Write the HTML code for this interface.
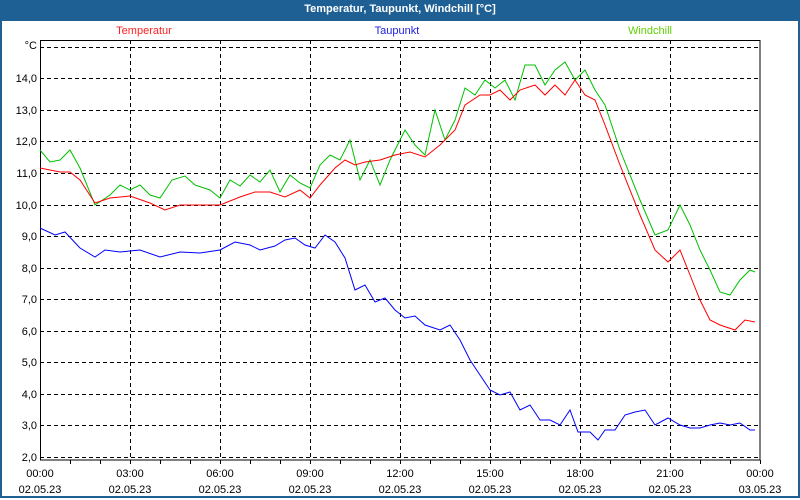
<!DOCTYPE html><html><head><style>
body{margin:0;width:800px;height:500px;overflow:hidden;background:#fff;font-family:"Liberation Sans",sans-serif}
.frame{position:absolute;left:0;top:0;width:796px;height:496px;border:2px solid #1e5f94;border-top:none}
.title{position:absolute;left:0;top:0;width:800px;height:21px;background:#1e5f94;color:#fff;font-weight:bold;font-size:11px;text-align:center;line-height:19px}
</style></head><body>
<div class="frame"></div>
<div class="title">Temperatur, Taupunkt, Windchill [°C]</div>
<svg width="800" height="500" style="position:absolute;left:0;top:0" font-family="Liberation Sans, sans-serif" font-size="11">
<text x="144" y="34" fill="#ff2020" text-anchor="middle">Temperatur</text>
<text x="397" y="34" fill="#2020e0" text-anchor="middle">Taupunkt</text>
<text x="650" y="34" fill="#60d000" text-anchor="middle">Windchill</text>
<g stroke="#000" stroke-dasharray="4,3" stroke-width="1">
<path d="M40 47.5H760M40 78.5H760M40 110.5H760M40 141.5H760M40 173.5H760M40 205.5H760M40 236.5H760M40 268.5H760M40 299.5H760M40 331.5H760M40 362.5H760M40 394.5H760M40 425.5H760M40 457.5H760"/>
<path d="M130.5 40V460M220.5 40V460M310.5 40V460M400.5 40V460M490.5 40V460M580.5 40V460M670.5 40V460"/>
</g>
<rect x="40.5" y="40.5" width="719.5" height="419.5" fill="none" stroke="#000"/>
<g stroke="#000"><path d="M70.5 460v4M100.5 460v4M130.5 460v4M160.5 460v4M190.5 460v4M220.5 460v4M250.5 460v4M280.5 460v4M310.5 460v4M340.5 460v4M370.5 460v4M400.5 460v4M430.5 460v4M460.5 460v4M490.5 460v4M520.5 460v4M550.5 460v4M580.5 460v4M610.5 460v4M640.5 460v4M670.5 460v4M700.5 460v4M730.5 460v4M760.5 460v4"/></g>
<g text-anchor="end" fill="#000">
<text x="37" y="49">°C</text><text x="37" y="82">14,0</text><text x="37" y="114">13,0</text><text x="37" y="145">12,0</text><text x="37" y="177">11,0</text><text x="37" y="209">10,0</text><text x="37" y="240">9,0</text><text x="37" y="272">8,0</text><text x="37" y="303">7,0</text><text x="37" y="335">6,0</text><text x="37" y="366">5,0</text><text x="37" y="398">4,0</text><text x="37" y="429">3,0</text><text x="37" y="461">2,0</text>
</g>
<g text-anchor="middle" fill="#000">
<text x="40" y="477">00:00</text><text x="130" y="477">03:00</text><text x="220" y="477">06:00</text><text x="310" y="477">09:00</text><text x="400" y="477">12:00</text><text x="490" y="477">15:00</text><text x="580" y="477">18:00</text><text x="670" y="477">21:00</text><text x="760" y="477">00:00</text>
<text x="40" y="493">02.05.23</text><text x="130" y="493">02.05.23</text><text x="220" y="493">02.05.23</text><text x="310" y="493">02.05.23</text><text x="400" y="493">02.05.23</text><text x="490" y="493">02.05.23</text><text x="580" y="493">02.05.23</text><text x="670" y="493">02.05.23</text><text x="760" y="493">03.05.23</text>
</g>
<g fill="none" stroke-width="1">
<polyline stroke="#00c000" points="40,150 50,162 60,160 70,150 80,168 95,205 110,195 120,185 130,190 140,185 150,195 160,198 172,180 185,176 195,185 210,190 220,198 230,180 240,186 250,175 260,182 270,170 280,192 290,175 300,183 310,188 320,165 330,155 340,160 350,140 360,180 370,160 380,185 390,160 405,130 415,145 425,155 435,110 445,140 455,120 465,88 475,95 485,80 495,88 505,80 515,100 525,65 535,65 545,85 555,70 565,62 575,80 585,70 595,90 605,105 620,150 640,200 655,235 668,230 680,205 690,225 700,250 710,270 720,292 730,295 740,280 750,270 755,272"/>
<polyline stroke="#ff0000" points="40,168 60,172 70,172 80,180 95,203 110,198 130,196 150,203 165,210 180,205 200,205 220,205 240,197 255,192 270,192 285,197 300,190 310,198 320,185 335,168 345,160 355,165 365,162 380,160 395,155 410,152 425,157 440,145 455,130 465,105 480,95 490,95 500,90 510,100 520,90 535,85 545,95 555,85 565,95 575,80 585,95 595,100 605,125 620,165 640,215 655,250 668,262 680,250 690,275 700,300 710,320 720,325 735,330 745,320 755,322"/>
<polyline stroke="#0000ff" points="40,228 55,235 65,232 80,248 95,257 105,250 120,252 140,250 160,257 180,252 200,253 220,250 235,242 250,245 260,250 275,246 285,240 295,238 305,245 315,248 325,235 335,242 345,258 355,290 365,285 375,302 385,298 395,310 405,318 415,316 425,325 440,330 450,325 460,340 470,360 480,375 490,390 500,395 510,392 520,410 530,405 540,420 550,420 560,425 570,410 578,432 590,432 598,440 605,430 615,430 625,415 635,412 645,410 655,425 668,418 680,425 690,428 700,428 710,425 720,423 730,425 740,423 750,430 755,430"/>
</g>
</svg>
</body></html>
